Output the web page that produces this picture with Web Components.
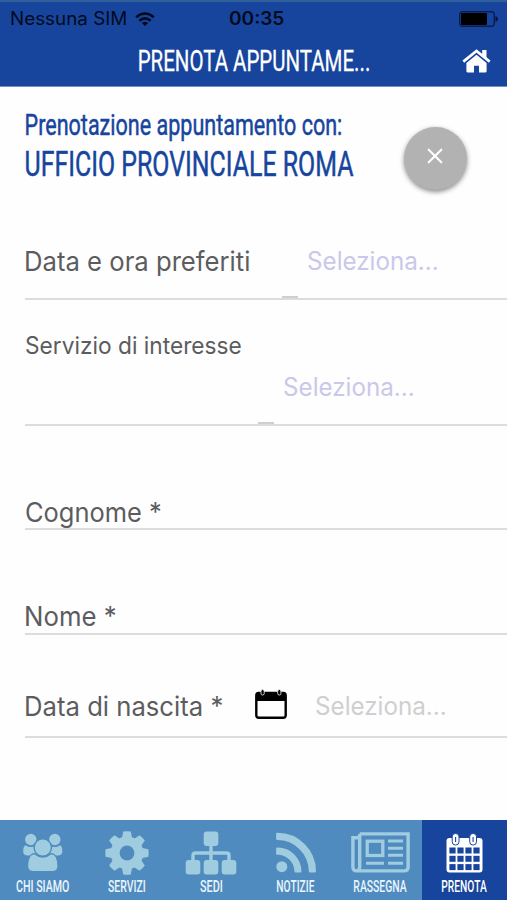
<!DOCTYPE html>
<html lang="it">
<head>
<meta charset="utf-8">
<title>Prenota appuntamento</title>
<style>
body{margin:0;background:#fefefe;overflow:hidden}
</style>
</head>
<body>
<booking-app></booking-app>
<script>
const define=(name,html,ready)=>customElements.define(name,class extends HTMLElement{
  constructor(){super();this.attachShadow({mode:'open'}).innerHTML=html}
  connectedCallback(){if(ready)ready.call(this)}
});

// Sets one line of text to an exact ink width, starting at the element's left edge.
customElements.define('fit-text',class extends HTMLElement{
  constructor(){
    super();
    this.attachShadow({mode:'open'}).innerHTML=`<style>
      :host{display:block;flex:none;white-space:nowrap}
      span{display:inline-block;transform-origin:0 50%;vertical-align:top}
    </style><span></span>`;
  }
  connectedCallback(){
    const span=this.shadowRoot.querySelector('span'),w=+this.getAttribute('width');
    span.textContent=this.getAttribute('text');
    this.style.width=w+'px';
    const ctx=document.createElement('canvas').getContext('2d'),cs=getComputedStyle(span);
    ctx.font=`${cs.fontWeight} ${cs.fontSize} ${cs.fontFamily}`;
    const m=ctx.measureText(span.textContent);
    const s=w/(m.actualBoundingBoxRight+m.actualBoundingBoxLeft);
    span.style.transform=`translateX(${m.actualBoundingBoxLeft*s}px) scaleX(${s})`;
  }
});

const icons={
  wifi:`<svg width="20" height="15" viewBox="0 0 20 15" fill="none" stroke="#020a1c" stroke-width="2.5"><path d="M1.2 5.3Q10-2.2 18.8 5.3M4.3 8.8Q10 4 15.7 8.8"/><path d="M10 14 6.9 11Q10 8.5 13.1 11Z" fill="#020a1c" stroke="none"/></svg>`,
  battery:`<svg width="39" height="16" viewBox="0 0 39 16"><rect x=".7" y=".7" width="34.6" height="14.6" rx="3" fill="none" stroke="#0a1e4c" stroke-width="1.4"/><rect x="2" y="2" width="26" height="12" rx="1.3" fill="#000"/><path d="M36.5 5Q39 6 39 8T36.5 11Z" fill="#06122f"/></svg>`,
  home:`<svg width="29" height="24" viewBox="0 0 29 24" fill="#fff"><path d="M14.5 5.7 4.4 14V22Q4.4 23.5 5.9 23.5H12V16.7H17V23.5H23.1Q24.6 23.5 24.6 22V14Z"/><path d="M1.3 12.6 14.5 2 27.7 12.6" fill="none" stroke="#fff" stroke-width="2.7"/><path d="M20.2 1H24.5V9.2L20.2 5.7Z"/></svg>`,
  close:`<svg width="16" height="16" viewBox="0 0 16 16"><path d="M1.7 1.7 14.3 14.3M14.3 1.7 1.7 14.3" stroke="#fff" stroke-width="2.1" stroke-linecap="round"/></svg>`,
  date:`<svg width="32" height="30" viewBox="0 0 32 30"><rect x="1.3" y="4" width="29.4" height="24.7" rx="2.5" fill="#fff" stroke="#000" stroke-width="2.4"/><path d="M1 5Q1 3 4 3H28Q31 3 31 5V12H1Z"/><g fill="#000" stroke="#fff" stroke-width=".8"><rect x="6" y=".6" width="3.2" height="5.4" rx="1.5"/><rect x="22.7" y=".6" width="3.2" height="5.4" rx="1.5"/></g></svg>`,
  group:`<svg width="42" height="42" viewBox="0 0 42 42" fill="#a0cce0"><circle cx="8.8" cy="7.5" r="5.7"/><circle cx="32.8" cy="7.5" r="5.7"/><path d="M3.5 13.2Q8.8 17 14 13.2L16 23.5H6Q1.2 23.5 1.2 19.5Q1.2 14 3.5 13.2ZM38 13.2Q32.8 17 27.5 13.2L25.5 23.5H35.5Q40.3 23.5 40.3 19.5Q40.3 14 38 13.2Z"/><path d="M12.7 21.7Q20.8 28.5 28.9 21.7C33.5 21.7 36 27 36 34.2Q36 39.5 30.5 39.5H11.1Q5.6 39.5 5.6 34.2C5.6 27 8.1 21.7 12.7 21.7Z" stroke="#508bbf" stroke-width="1.2"/><circle cx="20.8" cy="15.5" r="8.7" stroke="#508bbf" stroke-width="1.4"/></svg>`,
  gear:`<svg width="44" height="44" viewBox="-22 -22 44 44"><g fill="#a0cce0">${[0,45,90,135].map(a=>`<path transform="rotate(${a})" d="M-5.2-14-3.8-21.4Q0-22 3.8-21.4L5.2-14V14L3.8 21.4Q0 22-3.8 21.4L-5.2 14Z"/>`).join('')}<circle r="16.4"/></g><circle r="7.4" fill="#508bbf"/></svg>`,
  tree:`<svg width="52" height="44" viewBox="0 0 52 44" fill="#a0cce0"><rect x="18.7" y=".5" width="14.6" height="14.6" rx="3"/><rect x=".7" y="29" width="14.6" height="14.6" rx="3"/><rect x="18.7" y="29" width="14.6" height="14.6" rx="3"/><rect x="36.7" y="29" width="14.6" height="14.6" rx="3"/><path d="M26 14V30M8 30V24.5Q8 22 10.5 22H41.5Q44 22 44 24.5V30" fill="none" stroke="#a0cce0" stroke-width="3.4"/></svg>`,
  rss:`<svg width="40" height="41" viewBox="0 0 40 41" fill="#a0cce0" stroke="#a0cce0" stroke-width="2.4" stroke-linejoin="round"><circle cx="5.8" cy="34.7" r="5.5" stroke="none"/><path d="M1.3 16.8A22.5 22.5 0 0 1 24.2 39.3H19.6A18 18 0 0 0 1.3 21.6ZM1.3 2A37.4 37.4 0 0 1 38.8 39.3H34A32.6 32.6 0 0 0 1.3 6.8Z"/></svg>`,
  news:`<svg width="59" height="41" viewBox="0 0 59 41" fill="none" stroke="#a0cce0" stroke-width="3.4"><path d="M8.7 1.9H57.1V35Q57.1 38.9 53.2 38.9H5.4Q1.9 38.9 1.9 35V5.7H8.7M8.7 1.9V35Q8.7 38.9 5 38.9"/><rect x="16.2" y="9.2" width="15.6" height="14.3" stroke-width="3.3"/><path d="M37 9H52M37 16.2H52M37 23.3H52M37 31.3H52M15 31.3H33" stroke-width="3"/></svg>`,
  calendar:`<svg width="37" height="40" viewBox="0 0 37 40"><rect x=".5" y="5" width="36" height="34.5" rx="3" fill="#fff"/><g fill="#17459e">${[14.5,22.8,31.1].map(y=>[3.4,11.4,19.4,27.4].map(x=>`<rect x="${x}" y="${y}" width="6.2" height="6"/>`).join('')).join('')}</g><g fill="#fff" stroke="#17459e" stroke-width="1"><rect x="6.2" y=".5" width="6.8" height="11.5" rx="3.2"/><rect x="23.7" y=".5" width="6.8" height="11.5" rx="3.2"/></g><path d="M9.6 4V9M27.1 4V9" stroke="#17459e" stroke-width="1.1"/></svg>`
};
define('ui-icon',`<style>:host{display:block;flex:none;line-height:0}svg{display:block}</style><div></div>`,function(){
  this.shadowRoot.querySelector('div').innerHTML=icons[this.getAttribute('name')];
});

define('app-header',`<style>
  :host{display:block;box-sizing:border-box;height:87px;background:#17459e;border-top:2px solid #30609a;border-bottom:1px solid #6f8fc6}
  .status{height:34px;display:grid;grid-template-columns:218px 1fr auto;align-items:center;padding:0 9px 0 11px;color:#020a1c;font:400 18px/34px Inter,sans-serif}
  .left{display:flex;align-items:center;gap:9px}
  .time{font-weight:600}
  .bar{height:50px;display:flex;justify-content:space-between;align-items:center;padding:0 16px 0 139px;color:#fff;font:400 30px/50px Roboto,sans-serif;-webkit-text-stroke:.3px}
</style>
<div class="status"><div class="left"><fit-text text="Nessuna SIM" width="115"></fit-text><ui-icon name="wifi"></ui-icon></div><fit-text class="time" text="00:35" width="55"></fit-text><ui-icon name="battery"></ui-icon></div>
<div class="bar"><fit-text text="PRENOTA APPUNTAME..." width="230"></fit-text><ui-icon name="home"></ui-icon></div>`);

define('office-heading',`<style>
  :host{display:flex;box-sizing:border-box;height:149px;padding:20px 40px 0 26px;justify-content:space-between;color:#17459e;font-family:Roboto,sans-serif;font-weight:400;-webkit-text-stroke:.5px}
  .a{font-size:29.5px;line-height:36px}
  .b{font-size:35px;line-height:43px}
  button{box-sizing:border-box;width:63px;height:63px;margin:20px 0 0;border:0;border-radius:50%;background:#b2b2b2;padding:0 2px 5px 0;display:grid;place-items:center;box-shadow:0 2px 5px #0007}
</style>
<div><fit-text class="a" text="Prenotazione appuntamento con:" width="315.5"></fit-text><fit-text class="b" text="UFFICIO PROVINCIALE ROMA" width="327.5"></fit-text></div>
<button aria-label="Chiudi"><ui-icon name="close"></ui-icon></button>`);

define('form-field',`<style>
  :host{display:flex;box-sizing:border-box;margin-left:25px;border-bottom:2px solid #dcdcde;font:400 26.5px/40px Inter,sans-serif;color:#5c5c5e;align-items:flex-start;position:relative}
  ::slotted(.value){font-size:25px;color:#c9c8ea}
</style><slot></slot>`);

define('tab-item',`<style>
  :host{display:flex;flex-direction:column;align-items:center;box-sizing:border-box;padding-left:1px;background:#508bbf;color:#e9f5fc;font:500 15.8px/20px Roboto,sans-serif}
  :host([active]){background:#17459e;color:#fff}
  .icon{height:57px;display:flex;align-items:center;box-sizing:border-box;padding-top:8px}
</style><div class="icon"><ui-icon></ui-icon></div><fit-text></fit-text>`,function(){
  const r=this.shadowRoot,t=document.createElement('fit-text'),i=document.createElement('ui-icon');
  t.setAttribute('text',this.getAttribute('label'));
  t.setAttribute('width',this.getAttribute('label-width'));
  i.setAttribute('name',this.getAttribute('icon'));
  r.querySelector('fit-text').replaceWith(t);
  r.querySelector('ui-icon').replaceWith(i);
});

define('tab-bar',`<style>
  :host{display:grid;grid-template-columns:repeat(5,84.4px) 1fr;height:80px;box-sizing:border-box;background:#508bbf}
</style>
<tab-item icon="group" label="CHI SIAMO" label-width="53.5"></tab-item>
<tab-item icon="gear" label="SERVIZI" label-width="37.5"></tab-item>
<tab-item icon="tree" label="SEDI" label-width="22.5"></tab-item>
<tab-item icon="rss" label="NOTIZIE" label-width="37.5"></tab-item>
<tab-item icon="news" label="RASSEGNA" label-width="53"></tab-item>
<tab-item icon="calendar" label="PRENOTA" label-width="45" active></tab-item>`);

define('booking-app',`<style>
  :host{display:flex;flex-direction:column;width:507px;height:900px}
  tab-bar{margin-top:auto}
  fit-text{padding-left:1px}
  .f1{height:64px;padding-top:5px}
  .f2{height:126px;flex-direction:column;padding-top:26px}
  .f2 .label{font-size:23.7px}
  .f3{height:104px;padding-top:66px}
  .f4{height:105px;padding-top:66px}
  .f5{height:103px;padding-top:51px}
  form-field .muted{color:#cfcfd1}
  .caret{position:absolute;width:16px;height:2px;bottom:0;background:#cfcfd2}
</style>
<app-header></app-header>
<office-heading></office-heading>
<form-field class="f1"><fit-text text="Data e ora preferiti" width="223"></fit-text><fit-text class="value" text="Seleziona..." width="129.5" style="margin-left:58px"></fit-text><i class="caret" style="left:257px"></i></form-field>
<form-field class="f2"><fit-text class="label" text="Servizio di interesse" width="215"></fit-text><fit-text class="value" text="Seleziona..." width="129.5" style="margin:1px 0 0 257.7px"></fit-text><i class="caret" style="left:233px"></i></form-field>
<form-field class="f3"><fit-text text="Cognome *" width="134.5"></fit-text></form-field>
<form-field class="f4"><fit-text text="Nome *" width="89.5"></fit-text></form-field>
<form-field class="f5"><fit-text text="Data di nascita *" width="196"></fit-text><ui-icon name="date" style="margin:3px 0 0 33px"></ui-icon><fit-text class="value muted" text="Seleziona..." width="129.5" style="margin-left:28px"></fit-text></form-field>
<tab-bar></tab-bar>`);
</script>
</body>
</html>
